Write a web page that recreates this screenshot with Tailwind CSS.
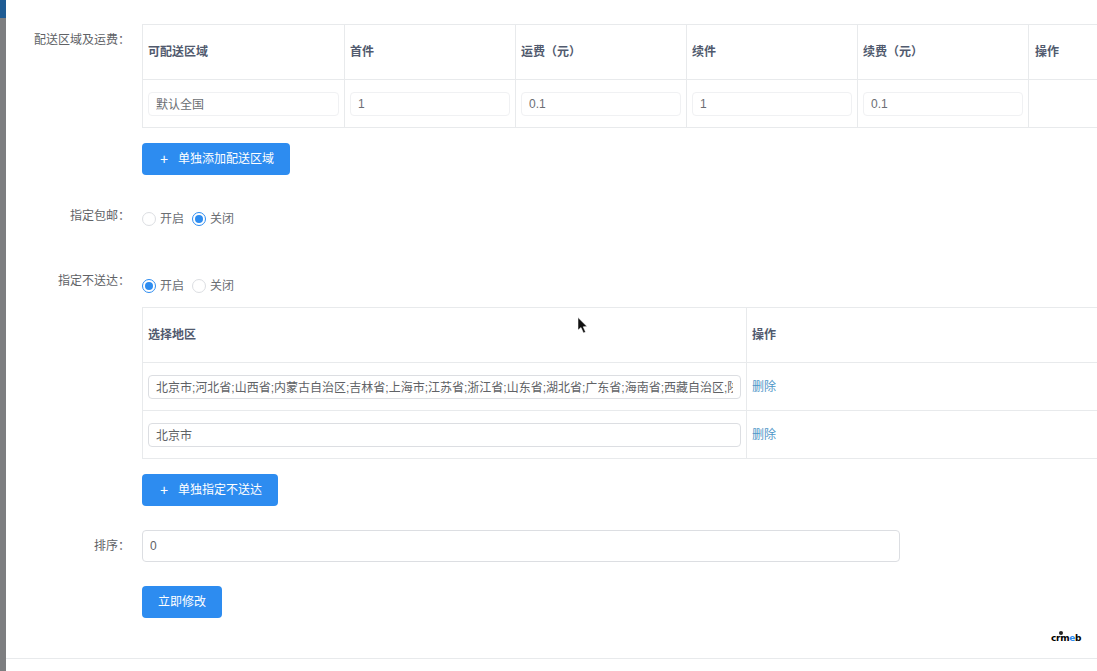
<!DOCTYPE html>
<html lang="zh-CN">
<head>
<meta charset="UTF-8">
<title>运费模板</title>
<script src="https://cdn.jsdelivr.net/npm/@tailwindcss/browser@4"></script>
</head>
<body class="bg-white overflow-hidden font-['Liberation_Sans','Noto_Sans_CJK_SC',sans-serif] text-[12px] text-[#606266]">
<div class="relative flex w-[1097px] h-[671px] overflow-hidden">
  <!-- 左侧遮罩条 -->
  <div class="w-[6px] shrink-0 bg-[#7d7e80]">
    <div class="h-[18px] bg-[#1f5c94]"></div>
  </div>

  <div class="flex-1 min-w-0">
    <div class="h-[658px] border-b border-[#e8eaec] box-content">
      <form class="pt-[24px]">

        <!-- 配送区域及运费 -->
        <div class="flex">
          <div class="w-[136px] shrink-0 pr-[12px] pt-[8px] text-right leading-[16px] text-[#606266]">配送区域及运费：</div>
          <div class="w-[955px] shrink-0">
            <table class="w-[960px] table-fixed border-collapse border-t border-l border-[#e0e0e0]">
              <colgroup>
                <col class="w-[202px]"><col class="w-[171px]"><col class="w-[171px]"><col class="w-[171px]"><col class="w-[171px]"><col class="w-[74px]">
              </colgroup>
              <thead>
                <tr class="h-[55px] text-left">
                  <th class="border border-[#e8eaec] px-[5px] font-semibold text-[#515a6e]">可配送区域</th>
                  <th class="border border-[#e8eaec] px-[5px] font-semibold text-[#515a6e]">首件</th>
                  <th class="border border-[#e8eaec] px-[5px] font-semibold text-[#515a6e]">运费（元）</th>
                  <th class="border border-[#e8eaec] px-[5px] font-semibold text-[#515a6e]">续件</th>
                  <th class="border border-[#e8eaec] px-[5px] font-semibold text-[#515a6e]">续费（元）</th>
                  <th class="border border-[#e8eaec] pl-[6px] font-semibold text-[#515a6e]">操作</th>
                </tr>
              </thead>
              <tbody>
                <tr class="h-[48px]">
                  <td class="border border-[#e8eaec] px-[5px]"><input readonly value="默认全国" class="block h-[24px] w-full rounded-[4px] border border-[#f0f1f3] px-[7px] text-[#6b6e73] outline-none"></td>
                  <td class="border border-[#e8eaec] px-[5px]"><input readonly value="1" class="block h-[24px] w-full rounded-[4px] border border-[#f0f1f3] px-[7px] text-[#6b6e73] outline-none"></td>
                  <td class="border border-[#e8eaec] px-[5px]"><input readonly value="0.1" class="block h-[24px] w-full rounded-[4px] border border-[#f0f1f3] px-[7px] text-[#6b6e73] outline-none"></td>
                  <td class="border border-[#e8eaec] px-[5px]"><input readonly value="1" class="block h-[24px] w-full rounded-[4px] border border-[#f0f1f3] px-[7px] text-[#6b6e73] outline-none"></td>
                  <td class="border border-[#e8eaec] px-[5px]"><input readonly value="0.1" class="block h-[24px] w-full rounded-[4px] border border-[#f0f1f3] px-[7px] text-[#6b6e73] outline-none"></td>
                  <td class="border border-[#e8eaec]"></td>
                </tr>
              </tbody>
            </table>
            <button type="button" class="mt-[15px] flex h-[32px] w-[148px] items-center rounded-[4px] bg-[#2d8cf0] pl-[18px] text-white">
              <span class="w-[18px] text-left text-[14px] leading-none">+</span><span>单独添加配送区域</span>
            </button>
          </div>
        </div>

        <!-- 指定包邮 -->
        <div class="mt-[25px] flex h-[40px]">
          <div class="w-[136px] shrink-0 pr-[12px] pt-[8px] text-right leading-[16px]">指定包邮：</div>
          <div class="flex h-[38px] items-center">
            <span class="h-[14px] w-[14px] rounded-full border border-[#dcdee2]"></span>
            <span class="ml-[4px] mr-[8px] text-[#6b6e73]">开启</span>
            <span class="flex h-[14px] w-[14px] items-center justify-center rounded-full border border-[#2d8cf0]"><span class="h-[8px] w-[8px] rounded-full bg-[#2d8cf0]"></span></span>
            <span class="ml-[4px] text-[#6b6e73]">关闭</span>
          </div>
        </div>

        <!-- 指定不送达 -->
        <div class="mt-[33px] flex">
          <div class="w-[136px] shrink-0 pr-[12px] text-right leading-[16px]">指定不送达：</div>
          <div class="w-[955px] shrink-0">
            <div class="mt-[5px] flex h-[16px] items-center">
              <span class="flex h-[14px] w-[14px] items-center justify-center rounded-full border border-[#2d8cf0]"><span class="h-[8px] w-[8px] rounded-full bg-[#2d8cf0]"></span></span>
              <span class="ml-[4px] mr-[8px] text-[#6b6e73]">开启</span>
              <span class="h-[14px] w-[14px] rounded-full border border-[#dcdee2]"></span>
              <span class="ml-[4px] text-[#6b6e73]">关闭</span>
            </div>
            <table class="mt-[13px] w-[960px] table-fixed border-collapse border-t border-l border-[#e0e0e0]">
              <colgroup><col class="w-[604px]"><col></colgroup>
              <thead>
                <tr class="h-[55px] text-left">
                  <th class="border border-[#e8eaec] px-[5px] font-semibold text-[#515a6e]">选择地区</th>
                  <th class="border border-[#e8eaec] px-[5px] font-semibold text-[#515a6e]">操作</th>
                </tr>
              </thead>
              <tbody>
                <tr class="h-[48px]">
                  <td class="border border-[#e8eaec] px-[5px]"><input readonly value="北京市;河北省;山西省;内蒙古自治区;吉林省;上海市;江苏省;浙江省;山东省;湖北省;广东省;海南省;西藏自治区;陕西省" class="block h-[24px] w-full rounded-[4px] border border-[#dcdee2] px-[7px] text-[#606266] outline-none"></td>
                  <td class="border border-[#e8eaec] px-[5px]"><a class="text-[#4f96c8]">删除</a></td>
                </tr>
                <tr class="h-[48px]">
                  <td class="border border-[#e8eaec] px-[5px]"><input readonly value="北京市" class="block h-[24px] w-full rounded-[4px] border border-[#dcdee2] px-[7px] text-[#606266] outline-none"></td>
                  <td class="border border-[#e8eaec] px-[5px]"><a class="text-[#4f96c8]">删除</a></td>
                </tr>
              </tbody>
            </table>
            <button type="button" class="mt-[15px] flex h-[32px] w-[136px] items-center rounded-[4px] bg-[#2d8cf0] pl-[18px] text-white">
              <span class="w-[18px] text-left text-[14px] leading-none">+</span><span>单独指定不送达</span>
            </button>
          </div>
        </div>

        <!-- 排序 -->
        <div class="mt-[24px] flex">
          <div class="w-[136px] shrink-0 pr-[12px] pt-[8px] text-right leading-[16px]">排序：</div>
          <input readonly value="0" class="block h-[32px] w-[758px] rounded-[4px] border border-[#dcdee2] px-[7px] text-[#606266] outline-none">
        </div>

        <div class="ml-[136px] mt-[24px]">
          <button type="button" class="h-[32px] w-[80px] rounded-[4px] bg-[#2d8cf0] text-white">立即修改</button>
        </div>
      </form>
    </div>
  </div>

  <!-- 鼠标 -->
  <svg class="absolute left-[577px] top-[317px]" width="12" height="18" viewBox="0 0 12 18"><path d="M1 0.5 L1 13 L4 10.5 L6.5 16 L8.5 15 L6.2 9.8 L10 9.5 Z" fill="#111" stroke="#fff" stroke-width="0.5"/></svg>

  <!-- 水印 -->
  <div class="absolute left-[1051px] top-[633px] flex text-[9px] leading-[10px] font-bold text-black font-['DejaVu_Sans',sans-serif] tracking-[-0.3px]">
    <span>crm</span><span class="text-[#2d8cf0]">e</span><span>b</span>
    <span class="absolute left-[8px] top-[-2px] h-[4px] w-[4px] rounded-full bg-[#222]"></span>
  </div>
</div>
</body>
</html>
